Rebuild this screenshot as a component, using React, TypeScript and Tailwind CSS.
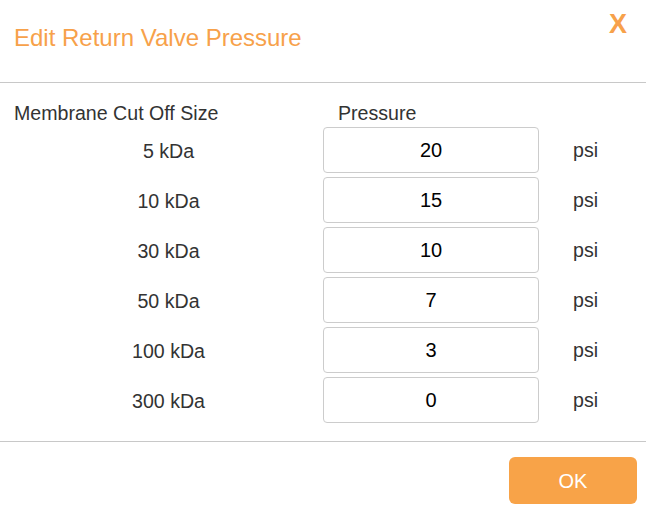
import React, { useState } from 'react';

const rows = [
  { size: '5 kDa', value: '20' },
  { size: '10 kDa', value: '15' },
  { size: '30 kDa', value: '10' },
  { size: '50 kDa', value: '7' },
  { size: '100 kDa', value: '3' },
  { size: '300 kDa', value: '0' },
];

export default function App() {
  const [values, setValues] = useState(rows.map(r => r.value));

  return (
    <div className="w-[646px] h-[520px] bg-white text-[#333] font-['Liberation_Sans',Arial,sans-serif]">
      <header className="h-[83px] border-b border-[#c8c8c8] flex justify-between items-start">
        <h2 className="pl-[14px] pt-[24px] text-[24px] leading-[28px] text-[#f7a14a]">Edit Return Valve Pressure</h2>
        <button className="mr-[19px] mt-[11px] text-[27px] leading-[27px] font-bold text-[#f7a14a]">X</button>
      </header>

      <div className="px-[14px] pt-[16px] pb-[18px]">
        <div className="grid grid-cols-[309px_216px_1fr] h-[28px] text-[19.6px] leading-[28px]">
          <span>Membrane Cut Off Size</span>
          <span className="pl-[15px]">Pressure</span>
          <span />
        </div>
        <div className="flex flex-col gap-[4px]">
          {rows.map((r, i) => (
            <div key={r.size} className="grid grid-cols-[309px_216px_1fr] items-center h-[46px] text-[19.6px]">
              <span className="text-center pt-[3px]">{r.size}</span>
              <input
                className="h-[46px] w-[216px] rounded-[4px] border border-[#cccccc] text-center text-[20px] text-black outline-none"
                value={values[i]}
                onChange={e => setValues(v => v.map((x, j) => (j === i ? e.target.value : x)))}
              />
              <span className="pl-[34px] pt-[2px]">psi</span>
            </div>
          ))}
        </div>
      </div>

      <footer className="border-t border-[#c8c8c8] pt-[15px] pr-[9px] flex justify-end">
        <button className="w-[128px] h-[47px] rounded-[6px] bg-[#f8a348] text-white text-[20px]">OK</button>
      </footer>
    </div>
  );
}
